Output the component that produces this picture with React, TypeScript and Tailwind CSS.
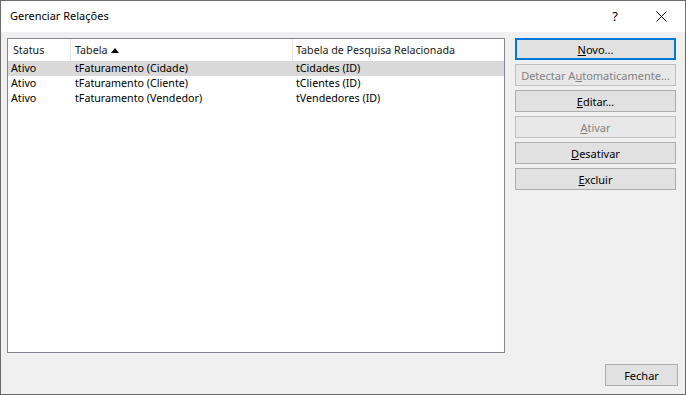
import React from "react";

const rows = [
  { status: "Ativo", tabela: "tFaturamento (Cidade)", pesquisa: "tCidades (ID)" },
  { status: "Ativo", tabela: "tFaturamento (Cliente)", pesquisa: "tClientes (ID)" },
  { status: "Ativo", tabela: "tFaturamento (Vendedor)", pesquisa: "tVendedores (ID)" },
];

function DlgButton({
  children,
  disabled,
  focused,
}: {
  children: React.ReactNode;
  disabled?: boolean;
  focused?: boolean;
}) {
  const base = "w-full h-[22px] flex items-center justify-center text-[11px] leading-none whitespace-nowrap";
  if (focused)
    return <div className={`${base} border-2 border-[#0078d7] bg-[#e1e1e1] text-black`}>{children}</div>;
  if (disabled)
    return <div className={`${base} border border-[#bfbfbf] bg-[#e8e8e8] text-[#838383]`}>{children}</div>;
  return <div className={`${base} border border-[#adadad] bg-[#e1e1e1] text-black`}>{children}</div>;
}

export default function App() {
  return (
    <div
      className="w-[686px] h-[395px] flex flex-col bg-[#f0f0f0] border border-[#6b6b6b] overflow-hidden text-black"
      style={{ fontFamily: "'Segoe UI', 'Noto Sans', sans-serif" }}
    >
      {/* === Title bar === */}
      <div className="h-[31px] shrink-0 bg-white flex items-center pl-[9px]">
        <span className="text-[11px]">Gerenciar Relações</span>
        <span className="ml-auto text-[13px] mr-[38px]">?</span>
        <svg width="11" height="11" viewBox="0 0 11 11" className="mr-[18px]">
          <path d="M0.5 0.5 L10.5 10.5 M10.5 0.5 L0.5 10.5" stroke="#000" strokeWidth="1" />
        </svg>
      </div>

      {/* === Body === */}
      <div className="flex flex-1 pl-[6px] pt-[6px]">
        {/* === List view === */}
        <div className="w-[498px] h-[315px] border border-[#828790] bg-white text-[10.7px]">
          <div className="h-[22px] flex items-center text-[#1a1a1a]">
            <div className="w-[63px] pl-[5px] border-r border-[#e5e5e5] h-full flex items-center">Status</div>
            <div className="w-[222px] pl-[4px] border-r border-[#e5e5e5] h-full flex items-center gap-[4px]">
              Tabela
              <svg width="8" height="5" viewBox="0 0 8 5">
                <path d="M0 5 L4 0 L8 5 Z" fill="#000" />
              </svg>
            </div>
            <div className="pl-[3px]">Tabela de Pesquisa Relacionada</div>
          </div>
          {rows.map((r, i) => (
            <div key={i} className={`h-[15px] flex items-center ${i === 0 ? "bg-[#d9d9d9]" : ""}`}>
              <div className="w-[63px] pl-[3px]">{r.status}</div>
              <div className="w-[222px] pl-[4px]">{r.tabela}</div>
              <div className="pl-[3px]">{r.pesquisa}</div>
            </div>
          ))}
        </div>

        {/* === Buttons === */}
        <div className="ml-[10px] w-[161px] flex flex-col gap-[4px]">
          <DlgButton focused>
            <span><u>N</u>ovo...</span>
          </DlgButton>
          <DlgButton disabled>
            <span>Detectar A<u>u</u>tomaticamente...</span>
          </DlgButton>
          <DlgButton>
            <span><u>E</u>ditar...</span>
          </DlgButton>
          <DlgButton disabled>
            <span><u>A</u>tivar</span>
          </DlgButton>
          <DlgButton>
            <span><u>D</u>esativar</span>
          </DlgButton>
          <DlgButton>
            <span><u>E</u>xcluir</span>
          </DlgButton>
        </div>
      </div>

      {/* === Footer === */}
      <div className="flex justify-end pr-[7px] pb-[8px]">
        <div className="w-[73px]">
          <DlgButton>Fechar</DlgButton>
        </div>
      </div>
    </div>
  );
}
